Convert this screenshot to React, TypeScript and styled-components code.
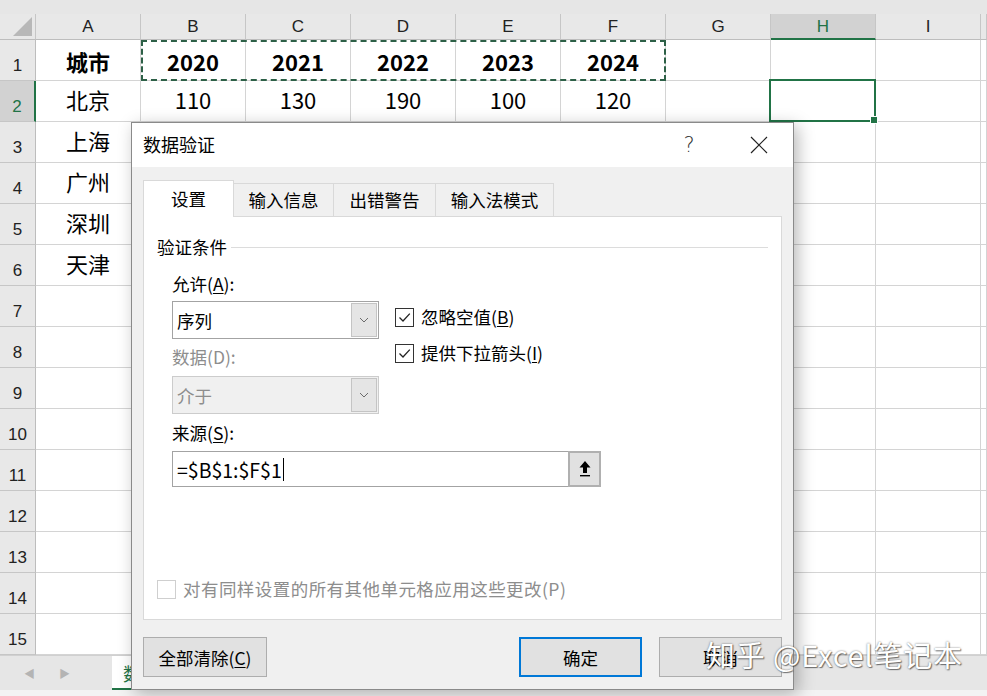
import React from 'react';
import styled, { createGlobalStyle } from 'styled-components';

const GlobalStyle = createGlobalStyle`
    html, body {
        margin : 0;
        padding : 0;
        background : #ffffff;
        overflow : hidden;
    }
    body {
        font-family : "Noto Sans CJK SC", "Noto Sans", sans-serif;
    }
    * {
        box-sizing : border-box;
    }
`;

const Screen = styled.div`
    position : relative;
    width : 987px;
    height : 696px;
    overflow : hidden;
    display : flex;
    flex-direction : column;
    background : #ffffff;
`;
const TopStrip = styled.div`
    flex : none;
    height : 14px;
    background : #e6e6e6;
`;
const Sheet = styled.div`
    flex : none;
    display : grid;
    grid-template-columns : 36px repeat(9, 105px) 1fr;
    grid-template-rows : 26px repeat(15, 41px);
`;
const Corner = styled.div`
    background : #e8e8e8;
    border-right : 1px solid #c6c6c6;
    border-bottom : 1px solid #bdbdbd;
    display : flex;
    align-items : flex-end;
    justify-content : flex-end;
    padding : 0 3px 3px 0;
`;
const ColHead = styled.div<{ $active?: boolean }>`
    background : ${p => p.$active ? '#d2d2d2' : '#e8e8e8'};
    border-right : 1px solid #c6c6c6;
    border-bottom : ${p => p.$active ? '2px solid #217346' : '1px solid #bdbdbd'};
    color : ${p => p.$active ? '#217346' : '#222222'};
    font : 17px "Liberation Sans", Arial, sans-serif;
    display : flex;
    align-items : center;
    justify-content : center;
    padding-top : 1px;
`;
const RowHead = styled.div<{ $active?: boolean }>`
    background : ${p => p.$active ? '#d2d2d2' : '#e8e8e8'};
    border-right : ${p => p.$active ? '2px solid #217346' : '1px solid #bdbdbd'};
    border-bottom : 1px solid #c6c6c6;
    color : ${p => p.$active ? '#217346' : '#222222'};
    font : 17px/20px "Liberation Sans", Arial, sans-serif;
    display : flex;
    align-items : flex-end;
    justify-content : center;
    padding-bottom : 4px;
`;
const Cell = styled.div<{ $bold?: boolean }>`
    position : relative;
    border-right : 1px solid #d4d4d4;
    border-bottom : 1px solid #d4d4d4;
    display : flex;
    align-items : center;
    justify-content : center;
    padding-top : ${p => p.$bold ? '2px' : '0'};
    padding-bottom : ${p => p.$bold ? '0' : '4px'};
    font-size : 22px;
    font-weight : ${p => p.$bold ? 700 : 400};
    color : #000000;
`;
const Marquee = styled.div`
    position : absolute;
    left : 0;
    top : 0;
    width : 525px;
    height : 41px;
    border : 2px dashed #2d6047;
    pointer-events : none;
    z-index : 2;
`;
const Selection = styled.div`
    position : absolute;
    left : -2px;
    top : -2px;
    width : 107px;
    height : 43px;
    border : 2px solid #217346;
    z-index : 2;
    &::after {
        content : '';
        position : absolute;
        right : -4px;
        bottom : -4px;
        width : 6px;
        height : 6px;
        background : #217346;
        border : 1px solid #ffffff;
    }
`;

const TabBar = styled.div`
    flex : none;
    height : 35px;
    display : flex;
    background : #e6e6e6;
    border-top : 1px solid #d0d0d0;
`;
const SheetNav = styled.div`
    width : 112px;
    display : flex;
    align-items : center;
    gap : 24px;
    padding-left : 24px;
    color : #b4b4b4;
    font-size : 11px;
`;
const SheetTab = styled.div`
    width : 110px;
    background : #ffffff;
    border-bottom : 2px solid #217346;
    color : #217346;
    font-size : 18px;
    padding : 4px 0 0 11px;
`;
const BottomStrip = styled.div`
    flex : 1;
    background : #f3f3f3;
`;

const Dialog = styled.div`
    position : absolute;
    left : 131px;
    top : 122px;
    width : 663px;
    height : 568px;
    background : #f0f0f0;
    border : 1px solid #8a8a8a;
    box-shadow : 4px 4px 16px rgba(0, 0, 0, 0.28);
    display : flex;
    flex-direction : column;
    font-family : "Noto Sans CJK SC", sans-serif;
    font-size : 17.5px;
    color : #000000;
    z-index : 5;
`;
const TitleBar = styled.div`
    height : 44px;
    background : #ffffff;
    display : flex;
    align-items : center;
    padding : 0 11px;
`;
const Title = styled.div`
    flex : 1;
    font-size : 18px;
    padding-bottom : 3px;
`;
const TitleButton = styled.div`
    width : 46px;
    height : 44px;
    display : flex;
    align-items : center;
    justify-content : center;
    color : #333333;
    font : 300 21px "DejaVu Sans", sans-serif;
`;
const TitleGap = styled.span`
    width : 24px;
`;
const Body = styled.div`
    flex : 1;
    display : flex;
    flex-direction : column;
    padding : 13px 11px 12px 11px;
`;
const TabRow = styled.div`
    height : 36px;
    display : flex;
    align-items : flex-end;
`;
const Tab = styled.div<{ $active?: boolean; $w: number }>`
    position : relative;
    z-index : ${p => p.$active ? 2 : 1};
    width : ${p => p.$w}px;
    height : ${p => p.$active ? '37px' : '33px'};
    margin-bottom : ${p => p.$active ? '-1px' : '0'};
    background : ${p => p.$active ? '#ffffff' : '#f0f0f0'};
    border : 1px solid #d9d9d9;
    border-bottom : none;
    border-left : ${p => p.$active ? '1px solid #d9d9d9' : 'none'};
    display : flex;
    align-items : center;
    justify-content : center;
    padding-bottom : 2px;
`;
const Panel = styled.div`
    height : 404px;
    background : #ffffff;
    border : 1px solid #d9d9d9;
    display : flex;
    flex-direction : column;
    padding : 21px 13px 20px 13px;
`;
const GroupHeader = styled.div`
    display : flex;
    align-items : center;
    line-height : 18px;
    &::after {
        content : '';
        flex : 1;
        height : 1px;
        margin-left : 4px;
        background : #dcdcdc;
    }
`;
const Indent = styled.div`
    margin-left : 15px;
    display : flex;
    flex-direction : column;
`;
const FieldLabel = styled.div<{ $disabled?: boolean; $top: number }>`
    line-height : 18px;
    margin-top : ${p => p.$top}px;
    color : ${p => p.$disabled ? '#8d8d8d' : '#000000'};
`;
const Key = styled.span`
    text-decoration : underline;
    text-underline-offset : 2px;
`;
const FieldRow = styled.div`
    display : flex;
    margin-top : 8px;
    gap : 16px;
`;
const LeftCol = styled.div`
    width : 207px;
    display : flex;
    flex-direction : column;
`;
const RightCol = styled.div`
    display : flex;
    flex-direction : column;
    gap : 16px;
    padding-top : 6px;
`;
const Select = styled.div<{ $disabled?: boolean; $top?: number }>`
    height : 38px;
    margin-top : ${p => p.$top || 0}px;
    border : 1px solid ${p => p.$disabled ? '#cccccc' : '#a3a3a3'};
    background : ${p => p.$disabled ? '#f0f0f0' : '#ffffff'};
    color : ${p => p.$disabled ? '#8d8d8d' : '#000000'};
    display : flex;
    align-items : center;
    padding : 0 1px 0 4px;
`;
const DropButton = styled.span`
    margin-left : auto;
    width : 26px;
    height : 34px;
    background : #e5e5e5;
    border : 1px solid #c4c4c4;
    display : flex;
    align-items : center;
    justify-content : center;
`;
const CheckRow = styled.label<{ $disabled?: boolean }>`
    display : flex;
    align-items : center;
    gap : 7px;
    line-height : 20px;
    color : ${p => p.$disabled ? '#8d8d8d' : '#000000'};
    letter-spacing : ${p => p.$disabled ? '0.45px' : '0'};
`;
const Box = styled.span<{ $disabled?: boolean }>`
    width : 19px;
    height : 19px;
    border : 1px solid ${p => p.$disabled ? '#cfcfcf' : '#333333'};
    background : #ffffff;
    display : inline-flex;
    align-items : center;
    justify-content : center;
`;
const SourceInput = styled.div`
    width : 428px;
    height : 36px;
    margin-top : 9px;
    border : 1px solid #a3a3a3;
    background : #ffffff;
    display : flex;
    align-items : center;
    padding-left : 4px;
    font-size : 19.5px;
`;
const Caret = styled.span`
    width : 1px;
    height : 23px;
    background : #000000;
    margin-left : 1px;
`;
const RefButton = styled.span`
    align-self : stretch;
    margin : -1px -2px -1px auto;
    width : 33px;
    background : #e1e1e1;
    border : 2px solid #b0b0b0;
    display : flex;
    align-items : center;
    justify-content : center;
`;
const Spacer = styled.div`
    flex : 1;
`;
const Footer = styled.div`
    margin-top : 17px;
    display : flex;
    gap : 17px;
`;
const Button = styled.button<{ $primary?: boolean; $w: number }>`
    width : ${p => p.$w}px;
    height : 40px;
    padding : 0;
    margin : 0;
    background : #e1e1e1;
    border : ${p => p.$primary ? '2px solid #0078d7' : '1px solid #adadad'};
    font : inherit;
    color : #000000;
`;
const Watermark = styled.div`
    position : absolute;
    left : 706px;
    top : 633px;
    z-index : 9;
    font-size : 29px;
    color : #ffffff;
    letter-spacing : 0.8px;
    text-shadow : 0 0 2px rgba(0, 0, 0, 0.55), 1px 1px 1px rgba(0, 0, 0, 0.45);
    white-space : nowrap;
`;

const columns = ['A', 'B', 'C', 'D', 'E', 'F', 'G', 'H', 'I', ''];
const data: string[][] = [
    ['城市', '2020', '2021', '2022', '2023', '2024'],
    ['北京', '110', '130', '190', '100', '120'],
    ['上海'],
    ['广州'],
    ['深圳'],
    ['天津'],
];

const Check = () => (
    <svg width="15" height="15" viewBox="0 0 15 15">
        <polyline points="2.5,7.5 6,11 12.8,3.6" fill="none" stroke="#222" strokeWidth="1.3" />
    </svg>
);

const Chevron = () => (
    <svg width="10" height="6" viewBox="0 0 10 6">
        <polyline points="1,1 5,5 9,1" fill="none" stroke="#6b6b6b" strokeWidth="1" />
    </svg>
);

const App: React.FC = () => {
    const rows = Array.from({ length: 15 }, (_, i) => i + 1);
    return (
        <Screen>
            <GlobalStyle />
            <TopStrip />
            <Sheet>
                <Corner>
                    <svg width="19" height="19" viewBox="0 0 19 19">
                        <polygon points="19,0 19,19 0,19" fill="#b8b8b8" />
                    </svg>
                </Corner>
                {columns.map((c, i) => (
                    <ColHead key={i} $active={c === 'H'}>{c}</ColHead>
                ))}
                {rows.map(r => (
                    <React.Fragment key={r}>
                        <RowHead $active={r === 2}>{r}</RowHead>
                        {columns.map((c, ci) => (
                            <Cell key={ci} $bold={r === 1}>
                                {(data[r - 1] && data[r - 1][ci]) || ''}
                                {r === 1 && c === 'B' && <Marquee />}
                                {r === 2 && c === 'H' && <Selection />}
                            </Cell>
                        ))}
                    </React.Fragment>
                ))}
            </Sheet>
            <TabBar>
                <SheetNav>
                    <span>◀</span>
                    <span>▶</span>
                </SheetNav>
                <SheetTab>数</SheetTab>
            </TabBar>
            <BottomStrip />

            <Dialog>
                <TitleBar>
                    <Title>数据验证</Title>
                    <TitleButton>?</TitleButton>
                    <TitleGap />
                    <TitleButton>
                        <svg width="18" height="18" viewBox="0 0 18 18">
                            <path d="M1 1 L17 17 M17 1 L1 17" stroke="#222" strokeWidth="1.2" />
                        </svg>
                    </TitleButton>
                </TitleBar>
                <Body>
                    <TabRow>
                        <Tab $active $w={91}>设置</Tab>
                        <Tab $w={100}>输入信息</Tab>
                        <Tab $w={102}>出错警告</Tab>
                        <Tab $w={118}>输入法模式</Tab>
                    </TabRow>
                    <Panel>
                        <GroupHeader>验证条件</GroupHeader>
                        <Indent>
                            <FieldLabel $top={19}>允许(<Key>A</Key>):</FieldLabel>
                            <FieldRow>
                                <LeftCol>
                                    <Select>
                                        序列
                                        <DropButton><Chevron /></DropButton>
                                    </Select>
                                    <FieldLabel $disabled $top={9}>数据(D):</FieldLabel>
                                    <Select $disabled $top={10}>
                                        介于
                                        <DropButton><Chevron /></DropButton>
                                    </Select>
                                </LeftCol>
                                <RightCol>
                                    <CheckRow>
                                        <Box><Check /></Box>
                                        <span>忽略空值(<Key>B</Key>)</span>
                                    </CheckRow>
                                    <CheckRow>
                                        <Box><Check /></Box>
                                        <span>提供下拉箭头(<Key>I</Key>)</span>
                                    </CheckRow>
                                </RightCol>
                            </FieldRow>
                            <FieldLabel $top={10}>来源(<Key>S</Key>):</FieldLabel>
                            <SourceInput>
                                =$B$1:$F$1
                                <Caret />
                                <RefButton>
                                    <svg width="16" height="20" viewBox="0 0 16 20">
                                        <polygon points="8,2 13.5,8.5 10,8.5 10,14 6,14 6,8.5 2.5,8.5" fill="#000" />
                                        <rect x="3" y="16" width="10" height="1.4" fill="#000" />
                                    </svg>
                                </RefButton>
                            </SourceInput>
                        </Indent>
                        <Spacer />
                        <CheckRow $disabled>
                            <Box $disabled />
                            <span>对有同样设置的所有其他单元格应用这些更改(P)</span>
                        </CheckRow>
                    </Panel>
                    <Footer>
                        <Button $w={124}>全部清除(<Key>C</Key>)</Button>
                        <Spacer />
                        <Button $primary $w={123}>确定</Button>
                        <Button $w={123}>取消</Button>
                    </Footer>
                </Body>
            </Dialog>
            <Watermark>知乎 @Excel笔记本</Watermark>
        </Screen>
    );
};

export default App;
